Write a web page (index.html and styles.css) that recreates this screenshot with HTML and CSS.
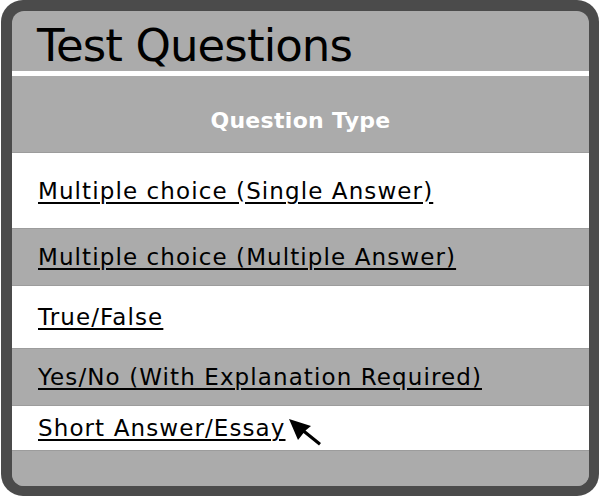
FILE: index.html
```html
<!DOCTYPE html>
<html>
<head>
<meta charset="utf-8">
<link rel="stylesheet" href="styles.css">
</head>
<body>
<div class="frame">
  <div class="panel">
    <h1 class="title">Test Questions</h1>
    <div class="head">Question Type</div>
    <div class="row white r1"><a href="#">Multiple choice (Single Answer)</a></div>
    <div class="row gray r2"><a href="#">Multiple choice (Multiple Answer)</a></div>
    <div class="row white r3"><a href="#">True/False</a></div>
    <div class="row gray r4"><a href="#">Yes/No (With Explanation Required)</a></div>
    <div class="row white r5"><a href="#">Short Answer/Essay</a><svg class="cursor" width="36" height="28" viewBox="0 0 36 28"><path d="M1 1 L23 8 L17.5 12.5 L33 25 L31 27.5 L15.5 15 L10 22 Z" fill="#000"/></svg></div>
    <div class="row gray foot"></div>
  </div>
</div>
</body>
</html>
```
FILE: styles.css
```css
html, body {
  margin: 0;
  padding: 0;
  background: #fff;
}
body {
  font-family: "DejaVu Sans", Verdana, sans-serif;
}
.frame {
  box-sizing: border-box;
  margin-left: 1px;
  width: 598px;
  height: 496px;
  background: #4b4b4b;
  border-radius: 22px;
  padding: 11px 10px 10px 11px;
}
.panel {
  height: 100%;
  background: #ababab;
  border-radius: 12px;
  overflow: hidden;
  display: flex;
  flex-direction: column;
}
.title {
  margin: 0;
  box-sizing: border-box;
  height: 65px;
  padding-top: 10px;
  border-bottom: 5px solid #fff;
  padding-left: 25px;
  font-weight: normal;
  font-size: 45px;
  line-height: 50px;
  color: #000;
  letter-spacing: -0.9px;
}
.head {
  box-sizing: border-box;
  height: 76px;
  padding-top: 12px;
  display: flex;
  align-items: center;
  justify-content: center;
  color: #fff;
  font-weight: bold;
  font-size: 22px;
  letter-spacing: 0.3px;
}
.row {
  box-sizing: border-box;
  border-top: 1px solid #9c9c9c;
  display: flex;
  align-items: center;
  padding-left: 26px;
  font-size: 23px;
  letter-spacing: 1.1px;
}
.row a {
  color: #000;
  text-decoration: underline;
  text-underline-offset: 3px;
  text-decoration-thickness: 2px;
}
.white { background: #fff; }
.gray { background: #ababab; }
.r1 { height: 76px; }
.r2 { height: 57px; }
.r3 { height: 63px; }
.r4 { height: 57px; }
.r5 { height: 45px; }
.foot { flex: 1; }
.cursor {
  display: block;
  margin-left: 2px;
  margin-top: 8px;
}
```
